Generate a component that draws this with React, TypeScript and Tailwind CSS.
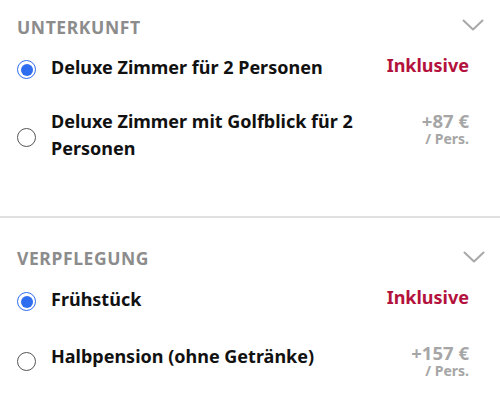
import React from "react";

function Chevron() {
  return (
    <svg width="22" height="12" viewBox="0 0 22 12" fill="none" className="block">
      <path d="M1.5 1.5 L11 10.5 L20.5 1.5" stroke="#a8a8a8" strokeWidth="2" strokeLinecap="round" strokeLinejoin="round" />
    </svg>
  );
}

function Radio({ checked, className }: { checked?: boolean; className?: string }) {
  if (checked) {
    return (
      <div className={"w-[19px] h-[19px] rounded-full border-[1.5px] border-[#2f6df0] flex items-center justify-center shrink-0 " + (className ?? "")}>
        <div className="w-[12px] h-[12px] rounded-full bg-[#2f6df0]" />
      </div>
    );
  }
  return <div className={"w-[19px] h-[19px] rounded-full border-[1.5px] border-[#555] shrink-0 " + (className ?? "")} />;
}

function Price({ amount }: { amount: string }) {
  return (
    <div className="flex flex-col items-end shrink-0">
      <span className="text-[18.5px] leading-[20px] font-bold text-[#a6a6a6] whitespace-nowrap">{amount}</span>
      <span className="text-[14px] leading-[15px] font-bold text-[#a6a6a6] whitespace-nowrap">/ Pers.</span>
    </div>
  );
}

function Inklusive() {
  return <span className="text-[18px] leading-[22px] font-bold text-[#b3123c] shrink-0">Inklusive</span>;
}

export default function App() {
  return (
    <div className="w-[500px] h-[401px] bg-white overflow-hidden font-['Noto_Sans','Open_Sans',sans-serif] text-[#111]">
      <section className="pt-[16px] pb-[54px]">
        <div className="flex items-start justify-between pl-[17px] pr-[16px] h-[22px]">
          <h2 className="text-[17.5px] leading-[22px] font-bold tracking-[0.6px] text-[#8c8c8c]">UNTERKUNFT</h2>
          <div className="mt-[3px]"><Chevron /></div>
        </div>
        <div className="flex items-start pl-[17px] pr-[31px] mt-[16px]">
          <Radio checked className="mt-[6px]" />
          <span className="ml-[15px] flex-1 text-[18px] leading-[26px] font-bold">Deluxe Zimmer für 2 Personen</span>
          <Inklusive />
        </div>
        <div className="flex items-start pl-[17px] pr-[31px] mt-[28px]">
          <Radio className="mt-[20px]" />
          <span className="ml-[15px] flex-1 text-[18px] leading-[27px] font-bold pr-[30px]">Deluxe Zimmer mit Golfblick für 2 Personen</span>
          <div className="pt-[3px]">
            <Price amount="+87 €" />
          </div>
        </div>
      </section>
      <div className="h-[2px] bg-[#e0e0e0]" />
      <section className="pt-[29px]">
        <div className="flex items-start justify-between pl-[17px] pr-[15px] h-[22px]">
          <h2 className="text-[17.5px] leading-[22px] font-bold tracking-[0.6px] text-[#8c8c8c]">VERPFLEGUNG</h2>
          <div className="mt-[4px]"><Chevron /></div>
        </div>
        <div className="flex items-start pl-[17px] pr-[31px] mt-[17px]">
          <Radio checked className="mt-[6px]" />
          <span className="ml-[15px] flex-1 text-[18px] leading-[26px] font-bold">Frühstück</span>
          <Inklusive />
        </div>
        <div className="flex items-start pl-[17px] pr-[31px] mt-[31px]">
          <Radio className="mt-[9px]" />
          <span className="ml-[15px] flex-1 text-[18px] leading-[26px] font-bold">Halbpension (ohne Getränke)</span>
          <Price amount="+157 €" />
        </div>
      </section>
    </div>
  );
}
